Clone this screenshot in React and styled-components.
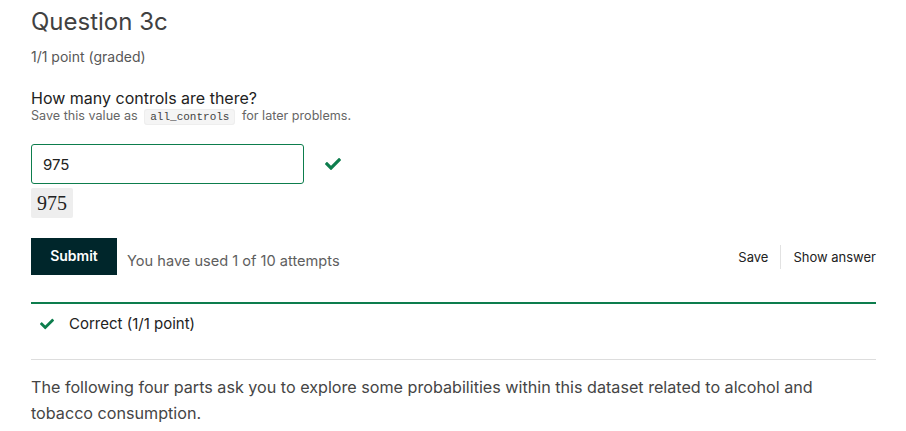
import React from "react";
import styled, { createGlobalStyle } from "styled-components";
import { FaCheck } from "react-icons/fa";

const GlobalStyle = createGlobalStyle`
	body {
		margin: 0;
		background: #fff;
		font-family: Inter, "Noto Sans", sans-serif;
		color: #454545;
	}
`;

const Problem = () => {
	return (
		<Page>
			<GlobalStyle />
			<Title>Question 3c</Title>
			<Points>1/1 point (graded)</Points>

			<Prompt>How many controls are there?</Prompt>
			<Hint>
				Save this value as <Code>all_controls</Code> for later problems.
			</Hint>

			<InputRow>
				<AnswerInput defaultValue='975' />
				<StatusIcon>
					<FaCheck />
				</StatusIcon>
			</InputRow>
			<Preview>975</Preview>

			<ActionBar>
				<SubmitGroup>
					<SubmitButton>Submit</SubmitButton>
					<Attempts>You have used 1 of 10 attempts</Attempts>
				</SubmitGroup>
				<Links>
					<LinkButton>Save</LinkButton>
					<LinkButton $divider>Show answer</LinkButton>
				</Links>
			</ActionBar>

			<Feedback>
				<FaCheck />
				<span>Correct (1/1 point)</span>
			</Feedback>

			<Paragraph>
				The following four parts ask you to explore some probabilities within this
				dataset related to alcohol and tobacco consumption.
			</Paragraph>
		</Page>
	);
};

export default Problem;

// Styled Components
const Page = styled.div`
	width: 845px;
	padding: 7px 0 0 31px;
`;

const Title = styled.h2`
	margin: 0;
	font-size: 24px;
	font-weight: 400;
	line-height: 30px;
	color: #414141;
`;

const Points = styled.div`
	margin-top: 11px;
	font-size: 14px;
	line-height: 18px;
	color: #575757;
`;

const Prompt = styled.div`
	margin-top: 22px;
	font-size: 16px;
	line-height: 20px;
	color: #222;
`;

const Hint = styled.div`
	font-size: 12.6px;
	line-height: 16px;
	color: #666;
`;

const Code = styled.code`
	font-family: "Liberation Mono", "DejaVu Sans Mono", monospace;
	font-size: 11px;
	background: #f5f5f5;
	border: 1px solid #eee;
	border-radius: 3px;
	padding: 1px 5px;
	margin: 0 3px;
	color: #444;
`;

const InputRow = styled.div`
	display: flex;
	align-items: center;
	gap: 21px;
	margin-top: 19px;
`;

const AnswerInput = styled.input`
	box-sizing: border-box;
	width: 273px;
	height: 40px;
	padding: 0 11px;
	border: 1px solid #0d7d4d;
	border-radius: 3px;
	font-family: Inter, sans-serif;
	font-size: 15px;
	color: #222;
	outline: none;
`;

const StatusIcon = styled.span`
	display: flex;
	color: #0d7d4d;
	font-size: 16px;
`;

const Preview = styled.div`
	display: inline-block;
	margin-top: 4px;
	padding: 3px 6px;
	background: #eee;
	border-radius: 2px;
	font-family: "Liberation Serif", "DejaVu Serif", serif;
	font-size: 20px;
	line-height: 24px;
	color: #222;
`;

const ActionBar = styled.div`
	display: flex;
	justify-content: space-between;
	align-items: center;
	margin-top: 20px;
`;

const SubmitGroup = styled.div`
	display: flex;
	align-items: center;
	gap: 10px;
`;

const SubmitButton = styled.button`
	height: 37px;
	width: 86px;
	border: none;
	border-radius: 0;
	background: #00262b;
	color: #fff;
	font-family: Inter, sans-serif;
	font-size: 14px;
	font-weight: 600;
	padding-bottom: 3px;
`;

const Attempts = styled.span`
	margin-top: 8px;
	font-size: 14.6px;
	color: #5e5e5e;
`;

const Links = styled.div`
	display: flex;
	align-items: center;
`;

const LinkButton = styled.span`
	font-size: 13px;
	line-height: 24px;
	color: #222;
	padding: 0 12px;
	border-left: ${(p) => (p.$divider ? "1px solid #e2e2e2" : "none")};

	&:last-child {
		padding-right: 0;
	}
`;

const Feedback = styled.div`
	display: flex;
	align-items: center;
	gap: 15px;
	margin-top: 27px;
	padding: 10px 0 25px 9px;
	border-top: 2px solid #0d7d4d;
	border-bottom: 1px solid #ddd;
	font-size: 15px;
	line-height: 20px;
	color: #222;

	svg {
		color: #0d7d4d;
		font-size: 14px;
	}
`;

const Paragraph = styled.p`
	margin: 14px 0 0;
	width: 820px;
	font-size: 16.15px;
	line-height: 26px;
	color: #454545;
`;
